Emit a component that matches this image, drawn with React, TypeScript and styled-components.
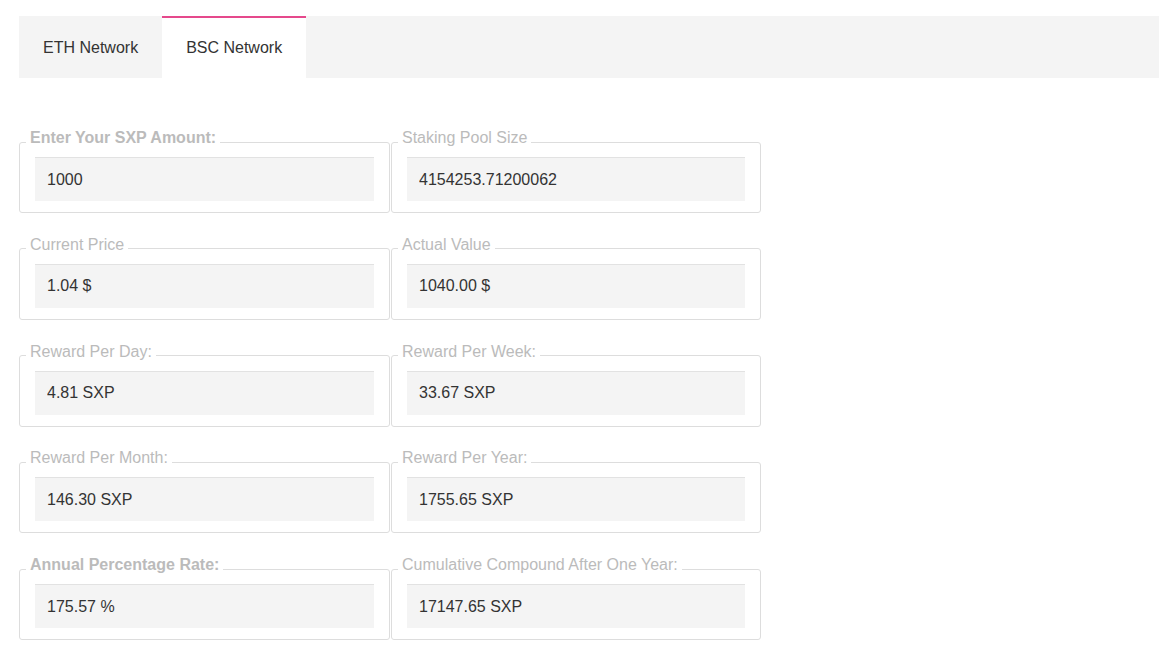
import styled, { createGlobalStyle } from 'styled-components';

const GlobalStyle = createGlobalStyle`
  body {
    margin: 0;
    background: #fff;
    font-family: 'Liberation Sans', Arial, sans-serif;
  }
`;

type Field = { label: string; value: string; strong?: boolean };

const fields: Field[] = [
  { label: 'Enter Your SXP Amount:', value: '1000', strong: true },
  { label: 'Staking Pool Size', value: '4154253.71200062' },
  { label: 'Current Price', value: '1.04 $' },
  { label: 'Actual Value', value: '1040.00 $' },
  { label: 'Reward Per Day:', value: '4.81 SXP' },
  { label: 'Reward Per Week:', value: '33.67 SXP' },
  { label: 'Reward Per Month:', value: '146.30 SXP' },
  { label: 'Reward Per Year:', value: '1755.65 SXP' },
  { label: 'Annual Percentage Rate:', value: '175.57 %', strong: true },
  { label: 'Cumulative Compound After One Year:', value: '17147.65 SXP' },
];

const App = () => {
  return (
    <Page>
      <GlobalStyle />
      <TabBar>
        <Tab>ETH Network</Tab>
        <Tab $active>BSC Network</Tab>
      </TabBar>
      <Grid>
        {fields.map((f) => (
          <Box key={f.label}>
            <Legend $strong={f.strong}>{f.label}</Legend>
            <Input readOnly value={f.value} />
          </Box>
        ))}
      </Grid>
    </Page>
  );
};

export default App;

const Page = styled.div`
  padding: 16px 13px 0 19px;
`;

const TabBar = styled.div`
  display: flex;
  height: 62px;
  background: #f4f4f4;
`;

const Tab = styled.div<{ $active?: boolean }>`
  display: flex;
  align-items: center;
  padding: 0 24px;
  font-size: 16px;
  color: #333;
  background: ${({ $active }) => ($active ? '#fff' : 'transparent')};
  border-top: 2px solid ${({ $active }) => ($active ? '#e5498c' : 'transparent')};
  box-sizing: border-box;
`;

const Grid = styled.div`
  display: grid;
  grid-template-columns: 371px 370px;
  column-gap: 1px;
  row-gap: 22.75px;
  margin-top: 51px;
`;

const Box = styled.fieldset`
  margin: 0;
  padding: 2px 15px 11px 15px;
  border: 1px solid #ddd;
  border-radius: 3px;
  min-width: 0;
`;

const Legend = styled.legend<{ $strong?: boolean }>`
  margin-left: -9px;
  padding: 0 4px 8px;
  font-size: 16px;
  line-height: 18px;
  color: #bbb;
  font-weight: ${({ $strong }) => ($strong ? 700 : 400)};
`;

const Input = styled.input`
  display: block;
  width: 100%;
  box-sizing: border-box;
  height: 44px;
  padding: 0 12px;
  border: none;
  border-top: 1px solid #e2e2e2;
  background: #f4f4f4;
  font-family: 'Liberation Sans', Arial, sans-serif;
  font-size: 16px;
  color: #333;
  outline: none;
`;
